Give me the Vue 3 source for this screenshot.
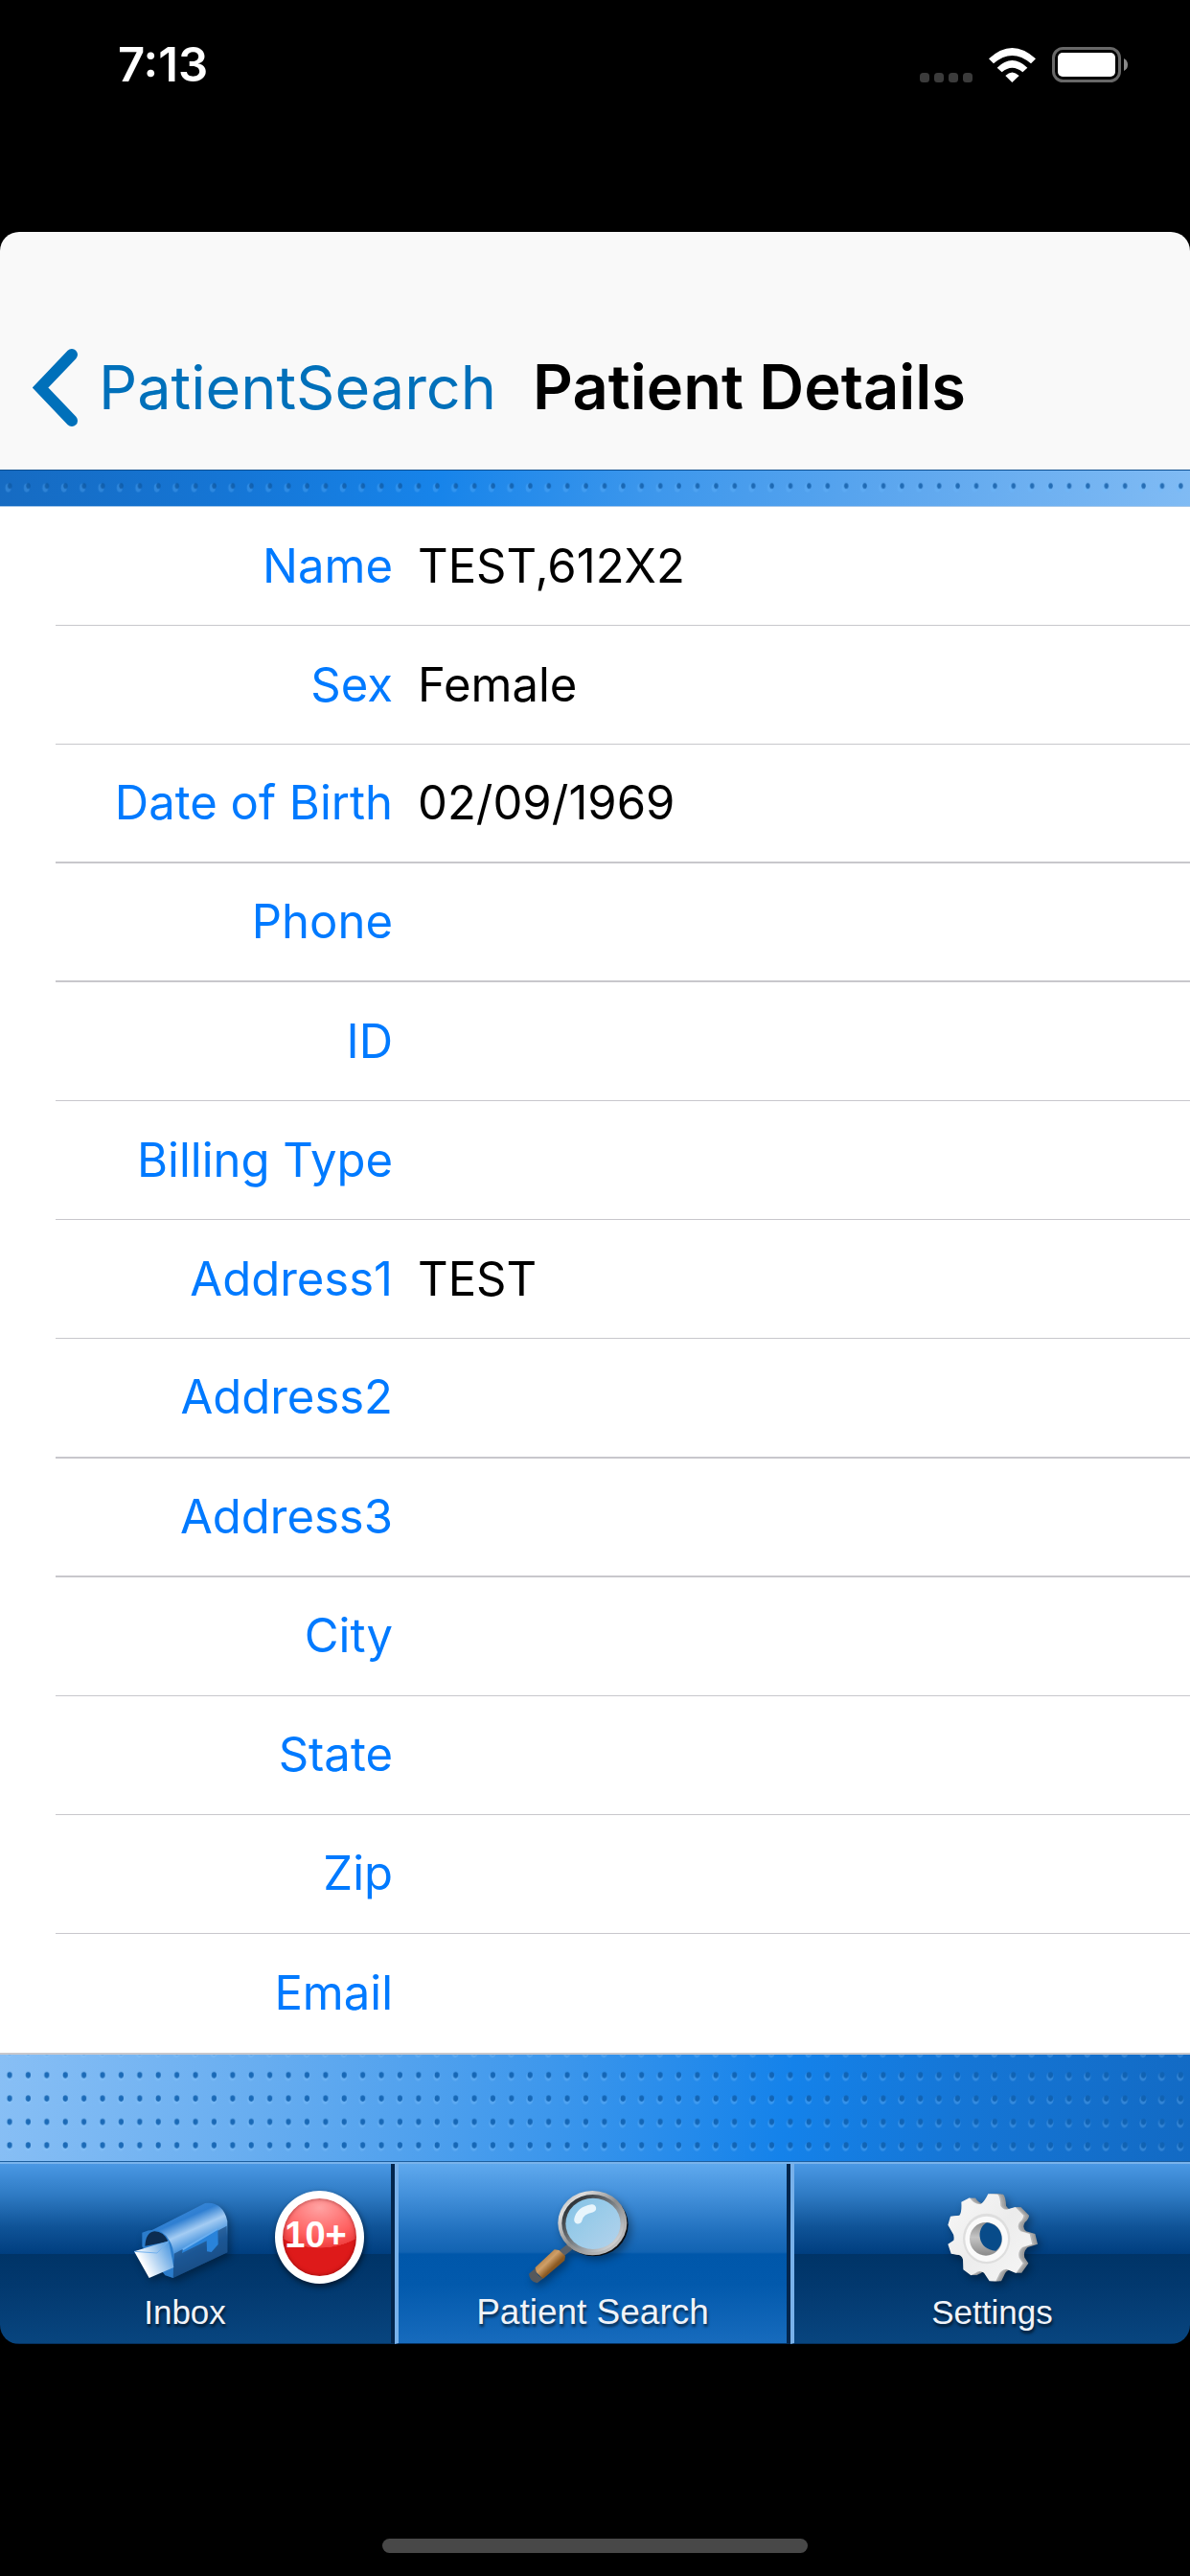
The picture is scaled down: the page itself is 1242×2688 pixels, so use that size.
<script setup>
const fields = [
  { label: 'Name', value: 'TEST,612X2' },
  { label: 'Sex', value: 'Female' },
  { label: 'Date of Birth', value: '02/09/1969' },
  { label: 'Phone', value: '' },
  { label: 'ID', value: '' },
  { label: 'Billing Type', value: '' },
  { label: 'Address1', value: 'TEST' },
  { label: 'Address2', value: '' },
  { label: 'Address3', value: '' },
  { label: 'City', value: '' },
  { label: 'State', value: '' },
  { label: 'Zip', value: '' },
  { label: 'Email', value: '' },
]
</script>

<template>
  <div class="screen">
    <header class="status">
      <span class="time">7:13</span>
      <span class="indicators">
        <svg class="signal" width="55" height="10" viewBox="0 0 55 10" aria-hidden="true">
          <rect v-for="n in 4" :key="n" :x="(n - 1) * 15" width="10" height="10" rx="3.5" fill="#3b3b3b" />
        </svg>
        <svg class="wifi" width="49" height="36" viewBox="0 0 147 108" fill="#fff" aria-hidden="true">
          <path d="M0 34 Q73 -34 147 34 L132 49 Q73 -1 15 49 Z" />
          <path d="M26 62 Q73 16 121 62 L106 76 Q73 49 41 76 Z" />
          <path d="M52 87 Q73 66 95 87 L73 108 Z" />
        </svg>
        <svg width="80" height="37" viewBox="0 0 80 37" aria-hidden="true">
          <rect x="1.5" y="1.5" width="69" height="34" rx="10" fill="none" stroke="#686868" stroke-width="3" />
          <rect x="6" y="6" width="60" height="25" rx="5" fill="#fff" />
          <path d="M75 12 Q79 14 79 18.500 T75 25 Z" fill="#8a8a8a" />
        </svg>
      </span>
    </header>

    <main class="app">
      <div class="navbar">
        <button class="back" type="button">
          <svg width="47" height="81" viewBox="0 0 47 81" aria-hidden="true">
            <path d="M41 6 L8 40.500 L41 75" fill="none" stroke="#0070ba" stroke-width="12" stroke-linecap="round" />
          </svg>
          <span>PatientSearch</span>
        </button>
        <h1>Patient Details</h1>
      </div>

      <div class="texture texture-top">
        <svg width="100%" height="100%" aria-hidden="true">
          <defs>
            <pattern id="dots-top" width="19.4" height="24.4" y="4" patternUnits="userSpaceOnUse">
              <ellipse cx="8.500" cy="14" rx="3" ry="4.500" fill="#6cb8ff" opacity=".28" />
              <ellipse cx="10.200" cy="12" rx="2.200" ry="3" fill="#0a559f" opacity=".75" />
            </pattern>
          </defs>
          <rect width="100%" height="100%" fill="url(#dots-top)" />
        </svg>
      </div>

      <section class="details">
        <table>
          <tbody>
            <tr v-for="field in fields" :key="field.label">
              <th scope="row">{{ field.label }}</th>
              <td>{{ field.value }}</td>
            </tr>
          </tbody>
        </table>
      </section>

      <div class="texture texture-bottom">
        <svg width="100%" height="100%" aria-hidden="true">
          <defs>
            <pattern id="dots-bottom" width="19.4" height="24.4" y="9" patternUnits="userSpaceOnUse">
              <ellipse cx="9.500" cy="14" rx="3.500" ry="4.500" fill="#8ecbff" opacity=".25" />
              <ellipse cx="10" cy="12.300" rx="2.600" ry="3.200" fill="#0b5cac" opacity=".85" />
            </pattern>
          </defs>
          <rect width="100%" height="100%" fill="url(#dots-bottom)" />
        </svg>
      </div>

      <nav class="tabs">
        <button class="tab inbox" type="button">
          <svg width="102" height="98" viewBox="415 555 306 294" aria-hidden="true">
            <defs>
              <linearGradient id="box-top" x1="0" y1="0" x2=".45" y2="1">
                <stop offset=".1" stop-color="#3f8ddb" />
                <stop offset=".34" stop-color="#2f7fd2" />
                <stop offset=".5" stop-color="#a4ccf3" />
                <stop offset=".64" stop-color="#5a9fe2" />
                <stop offset=".75" stop-color="#2372c2" />
                <stop offset="1" stop-color="#174a80" />
              </linearGradient>
              <linearGradient id="letter" x1="0" y1=".7" x2="1" y2=".2">
                <stop offset=".2" stop-color="#fff" />
                <stop offset="1" stop-color="#4795df" />
              </linearGradient>
            </defs>
            <path d="M470 680 L640 594 Q696 588 710 650 L710 748 L540 828 L520 820 Z" fill="url(#box-top)" />
            <path d="M543 752 L708 665 L710 748 L540 828 Z" fill="#194d86" opacity=".75" />
            <path d="M443 730 L443 686 Q500 660 528 710 Q542 730 542 765 L540 828 L515 820 Z" fill="#2b7ccb" />
            <path d="M452 728 Q455 684 482 682 Q510 682 525 714 Z" fill="#0c2c50" />
            <path d="M568 750 L570 737 L680 674 L681 723 L660 747 L646 745 L645 712 Z" fill="#2983da" />
            <path d="M570 739 L679 675" stroke="#69aef0" stroke-width="6" />
            <path d="M418 745 L526 712 L542 795 L465 828 Z" fill="url(#letter)" />
            <path d="M418 745 L490 750 L526 712" fill="none" stroke="#74b2ee" stroke-width="3" />
          </svg>
          <span>Inbox</span>
          <span class="badge">10+</span>
        </button>

        <button class="tab search" type="button" aria-current="page">
          <svg width="110" height="98" viewBox="450 564 330 294" aria-hidden="true">
            <defs>
              <linearGradient id="rim" x1="0" y1="0" x2="1" y2="1">
                <stop offset="0" stop-color="#9a9a9a" />
                <stop offset=".2" stop-color="#dedede" />
                <stop offset=".5" stop-color="#8d8d8d" />
                <stop offset="1" stop-color="#d5d5d5" />
              </linearGradient>
              <linearGradient id="rim-dark" x1="0" y1="0" x2="1" y2="1">
                <stop offset="0" stop-color="#0c1116" />
                <stop offset=".55" stop-color="#858b90" />
                <stop offset="1" stop-color="#f2f2f2" />
              </linearGradient>
              <linearGradient id="glass" x1="0" y1="0" x2="1" y2="1">
                <stop offset="0" stop-color="#84c2e6" />
                <stop offset=".5" stop-color="#9ccce9" />
                <stop offset="1" stop-color="#b3d2ec" />
              </linearGradient>
              <linearGradient id="wood" x1="0" y1="0" x2="1" y2="1">
                <stop offset=".2" stop-color="#a87439" />
                <stop offset=".42" stop-color="#cf9f68" />
                <stop offset=".6" stop-color="#8c5a22" />
                <stop offset="1" stop-color="#5d3a12" />
              </linearGradient>
            </defs>
            <path d="M590 735 L552 765" stroke="#596069" stroke-width="22" />
            <path d="M536 748 L550 750 L570 768 L568 782 L500 840 L475 815 L476 804 Z" fill="url(#wood)" />
            <path d="M476 806 L456 824 Q458 848 482 853 L502 838 Q480 832 476 806 Z" fill="#55585c" />
            <ellipse cx="660" cy="670" rx="107" ry="99" fill="#0b0f14" />
            <ellipse cx="655" cy="665" rx="108" ry="101" fill="url(#rim)" />
            <ellipse cx="656" cy="666" rx="97" ry="90" fill="url(#rim-dark)" />
            <ellipse cx="657" cy="667" rx="86" ry="80" fill="url(#glass)" />
            <path d="M610 655 Q616 625 654 619" fill="none" stroke="#e8f5fc" stroke-width="25" stroke-linecap="round" />
          </svg>
          <span>Patient Search</span>
        </button>

        <button class="tab settings" type="button">
          <svg width="96" height="98" viewBox="558 555 288 294" aria-hidden="true">
            <defs>
              <path
                id="gear"
                d="M688 565 L718 566 Q726 574 727 602 Q738 618 752 612 L773 606 L799 632 Q799 642 786 654 Q776 670 790 682 L818 690 L826 722 L795 732 Q780 745 785 764 L797 782 L775 813 L745 800 Q726 802 720 822 L712 838 L692 838 L675 812 Q660 802 648 813 L634 820 L610 802 L609 770 Q605 755 590 755 L572 752 L562 722 L580 710 Q583 695 575 685 L562 662 L570 635 L598 632 Q606 624 604 590 L630 577 Q645 600 665 597 Q676 590 688 565 Z"
              />
              <linearGradient id="gear-face" x1="0" y1="0" x2="1" y2="1">
                <stop offset="0" stop-color="#f8f8f8" />
                <stop offset=".5" stop-color="#ececec" />
                <stop offset="1" stop-color="#f7f7f7" />
              </linearGradient>
              <linearGradient id="gear-hole" x1="0" y1="0" x2="0" y2="1">
                <stop offset="0" stop-color="#8d8d8d" />
                <stop offset=".45" stop-color="#c4c4c4" />
                <stop offset="1" stop-color="#8a8a8a" />
              </linearGradient>
            </defs>
            <use href="#gear" x="17" fill="#999" />
            <use href="#gear" x="11" fill="#a6a6a6" />
            <use href="#gear" x="5" fill="#b8b8b8" />
            <use href="#gear" fill="url(#gear-face)" />
            <ellipse cx="683" cy="705" rx="74" ry="79" fill="#dedede" />
            <ellipse cx="683" cy="706" rx="67" ry="71" fill="#fafafa" />
            <ellipse cx="681" cy="706" rx="51" ry="52" fill="url(#gear-hole)" />
            <path d="M684 655 C732 660 746 718 712 743 C654 741 648 672 684 655 Z" fill="#084b89" />
          </svg>
          <span>Settings</span>
        </button>
      </nav>
    </main>

    <div class="home-indicator"></div>
  </div>
</template>

<style>
body {
  margin: 0;
  background: #000;
}
</style>

<style scoped>
.screen {
  display: flex;
  flex-direction: column;
  min-height: 100vh;
  box-sizing: border-box;
  padding-bottom: 24px;
  background: #000;
  font-family: Inter, "Liberation Sans", sans-serif;
}

.status {
  display: flex;
  justify-content: space-between;
  align-items: flex-start;
  height: 242px;
  box-sizing: border-box;
  padding: 36px 64px 0 123px;
  color: #fff;
}

.time {
  font-size: 49px;
  font-weight: 600;
  line-height: 64px;
}

.indicators {
  display: flex;
  align-items: flex-end;
  padding-top: 13px;
}

.signal,
.wifi {
  margin-right: 17px;
}

.app {
  display: flex;
  flex-direction: column;
  overflow: hidden;
  border-radius: 20px;
}

.navbar {
  display: flex;
  align-items: center;
  height: 248px;
  box-sizing: border-box;
  padding: 112px 34px 36px;
  background: #f9f9f9;
}

.back {
  display: flex;
  align-items: center;
  gap: 22px;
  padding: 0;
  border: 0;
  background: none;
  color: #0070ba;
  font: 400 63px/80px Inter, "Liberation Sans", sans-serif;
}

h1 {
  margin: 0 0 0 38px;
  color: #000;
  font-size: 65px;
  font-weight: 600;
  line-height: 80px;
}

.texture svg {
  display: block;
}

.texture-top {
  box-sizing: border-box;
  height: 39px;
  border-top: 1px solid #0e4f90;
  border-bottom: 1px solid #a9c9ea;
  background: linear-gradient(97deg, #166bc2, #1576d6 20%, #1784ea 37%, #3d97ec 55%, #61a9ef 78%, #80bbf4);
}

.texture-bottom {
  box-sizing: border-box;
  height: 112px;
  border-bottom: 1px solid #1d5f9f;
  background: linear-gradient(97deg, #88bff5, #67adf0 22%, #3d97ec 46%, #1482ea 66%, #1576d6 80%, #126ac4);
}

.details {
  padding-left: 58px;
  border-bottom: 2px solid #c8c7cc;
  background: #fff;
}

table {
  width: 100%;
  height: 1613px;
  border-spacing: 0;
  table-layout: fixed;
}

th,
td {
  box-sizing: border-box;
  height: 124px;
  padding: 0;
  border-bottom: 1px solid #c8c7cc;
  font-size: 49px;
  line-height: 60px;
}

tr:nth-child(5n + 3) > *,
tr:nth-child(5n + 4) > * {
  border-bottom-width: 2px;
}

tr:last-child > * {
  border-bottom: 0;
}

th {
  width: 352px;
  color: #007aff;
  font-weight: 400;
  text-align: right;
}

td {
  padding-left: 26px;
  color: #000;
}

.tabs {
  display: grid;
  grid-template-columns: 412fr 413fr 417fr;
  border-top: 2px solid #7ab4ec;
}

.tab {
  position: relative;
  display: flex;
  flex-direction: column;
  align-items: center;
  box-sizing: border-box;
  height: 188px;
  padding: 28px 0 0;
  border: 0;
  border-bottom: 1px solid #052f5c;
  background: linear-gradient(#4a98e4, #2f7bc4 32px, #0f5397 66px, #003e7f 94px, #003467 94px, #02386e 125px, #08457f);
  color: #f0f3f8;
  font: 400 35px/40px "Liberation Sans", Arial, sans-serif;
  text-shadow: 1px 3px 3px rgba(0, 0, 0, 0.6);
}

.tab svg {
  flex: none;
  margin-bottom: 9px;
  filter: drop-shadow(3px 4px 4px rgba(0, 0, 0, 0.35));
}

.inbox {
  padding-right: 22px;
  border-right: 4px solid #03264d;
}

.inbox svg {
  margin-right: 6px;
}

.search {
  border-left: 4px solid #78b1ea;
  border-right: 4px solid #03264d;
  background: linear-gradient(#5fa9ee, #4491db 32px, #1f6fbd 72px, #1263b2 92px, #0057aa 94px, #0259ac 125px, #176bbd);
  font-size: 37px;
}

.search svg {
  margin-right: 28px;
}

.settings {
  border-left: 4px solid #78b1ea;
}

.badge {
  position: absolute;
  top: 28px;
  left: 287px;
  box-sizing: border-box;
  width: 93px;
  height: 97px;
  padding-right: 8px;
  border: 8px solid #fff;
  border-radius: 50%;
  background: radial-gradient(ellipse 60px 42px at 50% 12%, #ffa2a2, #ff6060 70%, #f04040 99%, #de1a1a 100%);
  box-shadow: 1px 3px 6px rgba(0, 0, 0, 0.6), inset 0 0 4px rgba(90, 0, 0, 0.6);
  color: #fff;
  font-size: 38px;
  font-weight: 700;
  line-height: 76px;
  text-align: center;
  text-shadow: none;
}

.home-indicator {
  width: 444px;
  height: 15px;
  margin: auto auto 0;
  border-radius: 8px;
  background: #484848;
}
</style>
